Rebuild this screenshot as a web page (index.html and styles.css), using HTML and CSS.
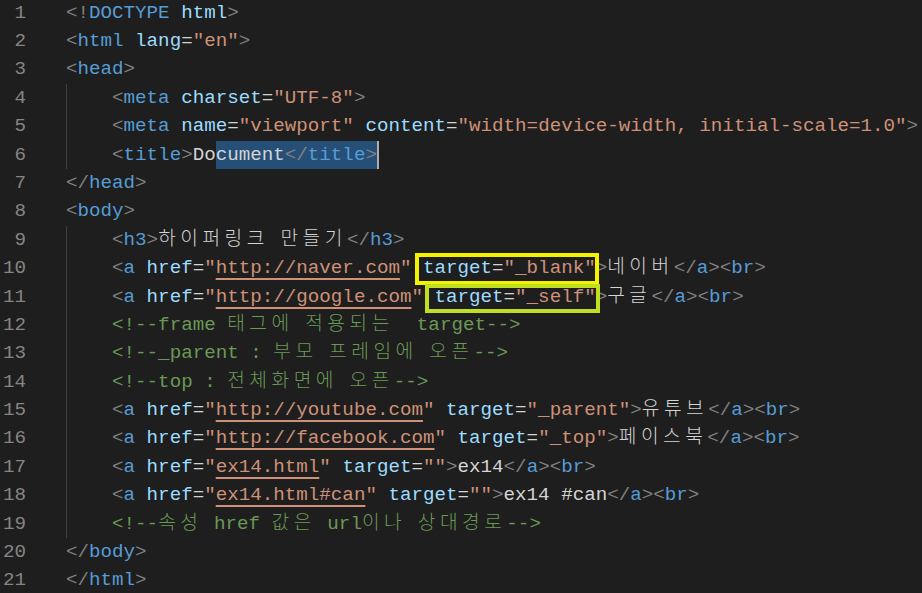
FILE: index.html
```html
<!DOCTYPE html>
<html lang="ko">
<head>
<meta charset="UTF-8">
<title>editor</title>
<link rel="stylesheet" href="styles.css">
</head>
<body>
<div class="editor">
<div class="row"><span class="ln">1</span><span class="code"><span class="p">&lt;!</span><span class="t">DOCTYPE</span> <span class="a">html</span><span class="p">&gt;</span></span></div>
<div class="row"><span class="ln">2</span><span class="code"><span class="p">&lt;</span><span class="t">html</span> <span class="a">lang</span>=<span class="s">"en"</span><span class="p">&gt;</span></span></div>
<div class="row"><span class="ln">3</span><span class="code"><span class="p">&lt;</span><span class="t">head</span><span class="p">&gt;</span></span></div>
<div class="row"><span class="ln">4</span><span class="code g">    <span class="p">&lt;</span><span class="t">meta</span> <span class="a">charset</span>=<span class="s">"UTF-8"</span><span class="p">&gt;</span></span></div>
<div class="row"><span class="ln">5</span><span class="code g">    <span class="p">&lt;</span><span class="t">meta</span> <span class="a">name</span>=<span class="s">"viewport"</span> <span class="a">content</span>=<span class="s">"width=device-width, initial-scale=1.0"</span><span class="p">&gt;</span></span></div>
<div class="row"><span class="ln">6</span><span class="code g">    <span class="p">&lt;</span><span class="t">title</span><span class="p">&gt;</span><span class="x">Do</span><span class="sel"><span class="x">cument</span><span class="p">&lt;/</span><span class="t">title</span><span class="p">&gt;</span></span><span class="caret"></span></span></div>
<div class="row"><span class="ln">7</span><span class="code"><span class="p">&lt;/</span><span class="t">head</span><span class="p">&gt;</span></span></div>
<div class="row"><span class="ln">8</span><span class="code"><span class="p">&lt;</span><span class="t">body</span><span class="p">&gt;</span></span></div>
<div class="row"><span class="ln">9</span><span class="code g">    <span class="p">&lt;</span><span class="t">h3</span><span class="p">&gt;</span><span class="x"><span class="k">하이퍼링크</span> <span class="k">만들기</span></span><span class="p">&lt;/</span><span class="t">h3</span><span class="p">&gt;</span></span></div>
<div class="row"><span class="ln">10</span><span class="code g">    <span class="p">&lt;</span><span class="t">a</span> <span class="a">href</span>=<span class="s">"<span class="u">http://naver.com</span>"</span> <span class="box box-y"><span class="a">target</span>=<span class="s">"_blank"</span></span><span class="p">&gt;</span><span class="x k">네이버</span><span class="p">&lt;/</span><span class="t">a</span><span class="p">&gt;&lt;</span><span class="t">br</span><span class="p">&gt;</span></span></div>
<div class="row"><span class="ln">11</span><span class="code g">    <span class="p">&lt;</span><span class="t">a</span> <span class="a">href</span>=<span class="s">"<span class="u">http://google.com</span>"</span> <span class="box box-g"><span class="a">target</span>=<span class="s">"_self"</span></span><span class="p">&gt;</span><span class="x k">구글</span><span class="p">&lt;/</span><span class="t">a</span><span class="p">&gt;&lt;</span><span class="t">br</span><span class="p">&gt;</span></span></div>
<div class="row"><span class="ln">12</span><span class="code g">    <span class="c">&lt;!--frame <span class="k">태그에</span> <span class="k">적용되는</span>  target--&gt;</span></span></div>
<div class="row"><span class="ln">13</span><span class="code g">    <span class="c">&lt;!--_parent : <span class="k">부모</span> <span class="k">프레임에</span> <span class="k">오픈</span>--&gt;</span></span></div>
<div class="row"><span class="ln">14</span><span class="code g">    <span class="c">&lt;!--top : <span class="k">전체화면에</span> <span class="k">오픈</span>--&gt;</span></span></div>
<div class="row"><span class="ln">15</span><span class="code g">    <span class="p">&lt;</span><span class="t">a</span> <span class="a">href</span>=<span class="s">"<span class="u">http://youtube.com</span>"</span> <span class="a">target</span>=<span class="s">"_parent"</span><span class="p">&gt;</span><span class="x k">유튜브</span><span class="p">&lt;/</span><span class="t">a</span><span class="p">&gt;&lt;</span><span class="t">br</span><span class="p">&gt;</span></span></div>
<div class="row"><span class="ln">16</span><span class="code g">    <span class="p">&lt;</span><span class="t">a</span> <span class="a">href</span>=<span class="s">"<span class="u">http://facebook.com</span>"</span> <span class="a">target</span>=<span class="s">"_top"</span><span class="p">&gt;</span><span class="x k">페이스북</span><span class="p">&lt;/</span><span class="t">a</span><span class="p">&gt;&lt;</span><span class="t">br</span><span class="p">&gt;</span></span></div>
<div class="row"><span class="ln">17</span><span class="code g">    <span class="p">&lt;</span><span class="t">a</span> <span class="a">href</span>=<span class="s">"<span class="u">ex14.html</span>"</span> <span class="a">target</span>=<span class="s">""</span><span class="p">&gt;</span><span class="x">ex14</span><span class="p">&lt;/</span><span class="t">a</span><span class="p">&gt;&lt;</span><span class="t">br</span><span class="p">&gt;</span></span></div>
<div class="row"><span class="ln">18</span><span class="code g">    <span class="p">&lt;</span><span class="t">a</span> <span class="a">href</span>=<span class="s">"<span class="u">ex14.html#can</span>"</span> <span class="a">target</span>=<span class="s">""</span><span class="p">&gt;</span><span class="x">ex14 #can</span><span class="p">&lt;/</span><span class="t">a</span><span class="p">&gt;&lt;</span><span class="t">br</span><span class="p">&gt;</span></span></div>
<div class="row"><span class="ln">19</span><span class="code g">    <span class="c">&lt;!--<span class="k">속성</span> href <span class="k">값은</span> url<span class="k">이나</span> <span class="k">상대경로</span>--&gt;</span></span></div>
<div class="row"><span class="ln">20</span><span class="code"><span class="p">&lt;/</span><span class="t">body</span><span class="p">&gt;</span></span></div>
<div class="row"><span class="ln">21</span><span class="code"><span class="p">&lt;/</span><span class="t">html</span><span class="p">&gt;</span></span></div>
</div>
</body>
</html>
```
FILE: styles.css
```css
html, body {
  margin: 0;
  padding: 0;
  background: #1e1e1e;
  overflow: hidden;
}
.editor {
  margin-top: -1.4px;
  font-family: "Liberation Mono", "Noto Sans CJK KR", monospace;
  font-size: 19.2px;
  line-height: 28.4px;
  color: #d4d4d4;
}
.row {
  display: grid;
  grid-template-columns: 26px 1fr;
  column-gap: 40px;
  height: 28.4px;
  white-space: pre;
}
.ln {
  text-align: right;
  color: #858585;
}
.code {
  display: block;
  height: 28.4px;
}
.code.g {
  background: linear-gradient(#404040, #404040) no-repeat 0 0 / 1px 100%;
}
.p { color: #808080; }
.t { color: #569cd6; }
.a { color: #9cdcfe; }
.s { color: #ce9178; }
.x { color: #d4d4d4; }
.c { color: #6a9955; }
.u {
  text-decoration: underline;
  text-decoration-color: #ce9178;
  text-decoration-thickness: 2px;
  text-underline-offset: 5px;
}
.k {
  font-family: "Noto Sans CJK KR", sans-serif;
  font-weight: 300;
  letter-spacing: 4.5px;
  line-height: 1;
}
.sel {
  display: inline-block;
  height: 28.4px;
  vertical-align: top;
  background: #264f78;
}
.caret {
  display: inline-block;
  width: 2px;
  height: 28px;
  vertical-align: top;
  background: #aeafad;
}
.box {
  display: inline-block;
  position: relative;
  height: 28.4px;
  vertical-align: top;
}
.box::after {
  content: "";
  position: absolute;
  border: 4px solid;
}
.box-y::after {
  border-color: #f5f200;
  left: -8px;
  right: -3px;
  top: -1.5px;
  bottom: -2.5px;
}
.box-g::after {
  border-color: #bfdf1f;
  left: -9px;
  right: -4px;
  top: 1px;
  bottom: -2px;
}
```
